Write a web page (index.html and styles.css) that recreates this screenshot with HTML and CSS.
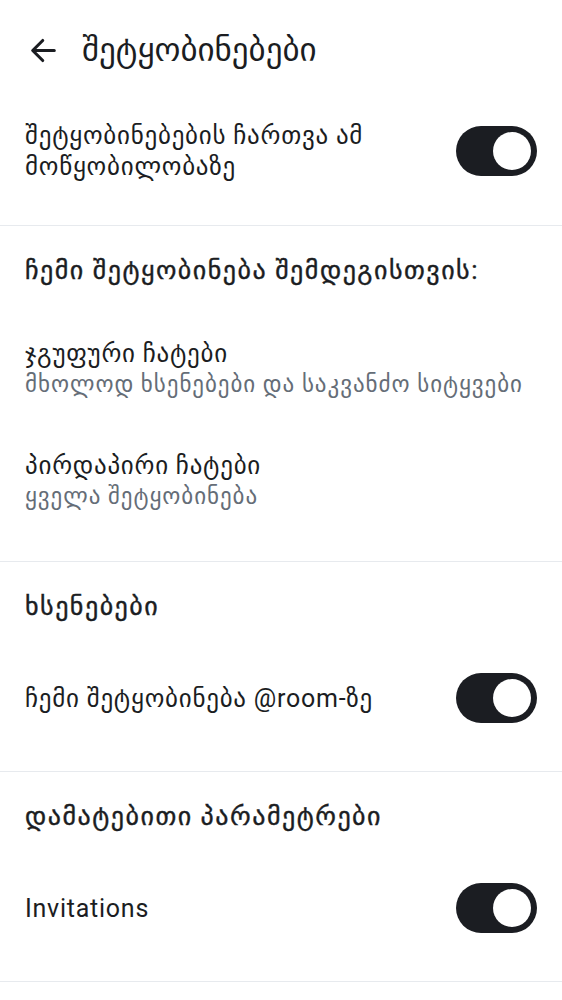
FILE: index.html
```html
<!DOCTYPE html>
<html lang="ka">
<head>
<meta charset="utf-8">
<title>შეტყობინებები</title>
<link rel="stylesheet" href="styles.css">
</head>
<body>
<div class="screen">
  <header class="topbar">
    <span class="back">
      <svg viewBox="0 0 24 24" width="37" height="37"><path d="M19 12H5.5M11.5 5.5L5 12l6.5 6.5" fill="none" stroke="#1b1d22" stroke-width="2" stroke-linecap="round" stroke-linejoin="round"/></svg>
    </span>
    <h1 class="title">შეტყობინებები</h1>
  </header>

  <section class="group">
    <div class="row switch-row first">
      <div class="label">შეტყობინებების ჩართვა ამ მოწყობილობაზე</div>
      <span class="switch"><span class="thumb"></span></span>
    </div>
  </section>

  <section class="group">
    <div class="cat">ჩემი შეტყობინება შემდეგისთვის:</div>
    <div class="row item">
      <div class="texts">
        <div class="label">ჯგუფური ჩატები</div>
        <div class="sub">მხოლოდ ხსენებები და საკვანძო სიტყვები</div>
      </div>
    </div>
    <div class="row item">
      <div class="texts">
        <div class="label">პირდაპირი ჩატები</div>
        <div class="sub">ყველა შეტყობინება</div>
      </div>
    </div>
  </section>

  <section class="group">
    <div class="cat">ხსენებები</div>
    <div class="row switch-row">
      <div class="label">ჩემი შეტყობინება @room-ზე</div>
      <span class="switch"><span class="thumb"></span></span>
    </div>
  </section>

  <section class="group">
    <div class="cat">დამატებითი პარამეტრები</div>
    <div class="row switch-row">
      <div class="label">Invitations</div>
      <span class="switch"><span class="thumb"></span></span>
    </div>
  </section>
</div>
</body>
</html>
```

FILE: styles.css
```css
html, body {
  margin: 0;
  padding: 0;
  background: #ffffff;
}
body {
  font-family: Roboto, "Noto Sans", "DejaVu Sans", sans-serif;
  color: #1b1d22;
  width: 562px;
}
.screen {
  display: flex;
  flex-direction: column;
}
.topbar {
  height: 100px;
  display: flex;
  align-items: center;
  padding-left: 25px;
  gap: 20px;
}
.back {
  width: 37px;
  height: 37px;
  display: flex;
}
.title {
  margin: 0;
  font-size: 33px;
  font-weight: 400;
  line-height: 40px;
}
.group {
  border-bottom: 1px solid #e7eaee;
  padding-bottom: 24px;
}
.row {
  display: flex;
  align-items: center;
  padding: 0 25px;
}
.switch-row {
  height: 98px;
  justify-content: space-between;
  gap: 20px;
}
.switch-row.first {
  height: 101px;
}
.label {
  font-size: 25px;
  line-height: 31px;
  letter-spacing: 0.75px;
}
.switch-row .label {
  max-width: 390px;
}
.item {
  height: 112px;
}
.sub {
  font-size: 23px;
  line-height: 32px;
  letter-spacing: 0.95px;
  color: #656d77;
}
.cat {
  height: 87px;
  display: flex;
  align-items: center;
  padding: 0 25px;
  font-size: 26px;
  font-weight: 400;
  letter-spacing: 1.5px;
  -webkit-text-stroke: 0.4px #1b1d22;
}
.switch {
  flex: none;
  width: 81px;
  height: 50px;
  border-radius: 25px;
  background: #1b1d22;
  display: flex;
  align-items: center;
  justify-content: flex-end;
  padding-right: 6px;
  box-sizing: border-box;
}
.thumb {
  width: 38px;
  height: 38px;
  border-radius: 50%;
  background: #ffffff;
}
```
